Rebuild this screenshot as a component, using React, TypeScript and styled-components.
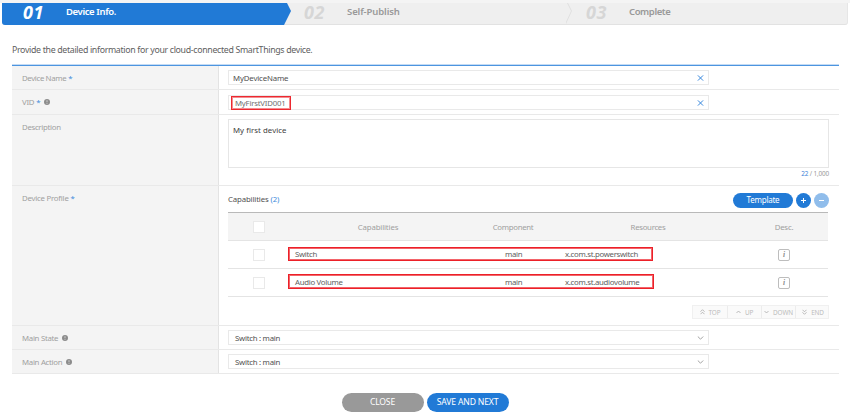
import React from "react";
import styled, { createGlobalStyle, css } from "styled-components";

const Global = createGlobalStyle`
  * { box-sizing: border-box; }
  body { margin: 0; background: #fff; font-family: "Noto Sans", "Open Sans", sans-serif; font-size: 7.8px; color: #555; overflow: hidden; }
  button { font: inherit; color: inherit; }
`;

const Text = styled.span<{ $ls?: number }>`
  letter-spacing: ${(p) => p.$ls ?? -0.3}px;
  white-space: pre;
`;

const Page = styled.main`
  width: 850px;
  height: 414px;
  border-top: 3px solid #f4f4f4;
`;

const Steps = styled.ol`
  list-style: none;
  margin: 0 0 0 2px;
  padding: 0;
  width: 846px;
  height: 22px;
  display: flex;
  background: #efefef;
  border-bottom: 1px solid #e2e2e2;
  border-right: 1px solid #e6e6e6;
  border-radius: 0 0 3px 3px;
`;

const Step = styled.li<{ $active?: boolean; $width: number; $pad: number }>`
  display: flex;
  align-items: center;
  flex: none;
  width: ${(p) => p.$width}px;
  height: 22px;
  padding-left: ${(p) => p.$pad}px;
  color: ${(p) => (p.$active ? "#fff" : "#999")};
  ${(p) =>
    p.$active &&
    css`
      background: #217ad6;
      border-bottom-left-radius: 3px;
      clip-path: polygon(0 0, 285px 0, 289px 8px, 282px 22px, 0 22px);
    `}
`;

const StepNumber = styled.span<{ $active?: boolean }>`
  width: 43px;
  font-size: 18px;
  letter-spacing: 0.6px;
  line-height: 18px;
  margin-top: -5px;
  font-weight: 700;
  font-style: italic;
  color: ${(p) => (p.$active ? "#fff" : "#d6d6d6")};
`;

const StepLabel = styled.span<{ $ls: number }>`
  font-size: 9.5px;
  font-weight: 600;
  line-height: 14px;
  margin-top: -5px;
  letter-spacing: ${(p) => p.$ls}px;
`;

const Chevron = styled.svg`
  flex: none;
  display: block;
`;

const Intro = styled.p`
  margin: 18px 0 0 12px;
  height: 21px;
  font-size: 8.8px;
  line-height: 14px;
  color: #606060;
`;

const Form = styled.section`
  margin-left: 12px;
  width: 827px;
  border-top: 1px solid #c4dbf4;
`;

const FormBody = styled.div`
  border-top: 1px solid #4c95e0;
`;

const Row = styled.div<{ $height: number }>`
  display: grid;
  grid-template-columns: 207px 620px;
  height: ${(p) => p.$height}px;
  border-bottom: 1px solid #e9e9e9;
`;

const Label = styled.div`
  display: flex;
  align-items: flex-start;
  padding: 7px 0 0 10px;
  line-height: 10px;
  background: #f4f4f4;
  border-right: 1px solid #e3e3e3;
  color: #a0a0a0;
  svg { margin: 2px 0 0 4px; }
`;

const Star = styled.span`
  color: #3d8bdb;
  margin-left: 2px;
`;

const Cell = styled.div<{ $top: number }>`
  padding: ${(p) => p.$top}px 0 0 9px;
`;

const Field = styled.div<{ $pad?: number; $drop?: number }>`
  display: flex;
  align-items: center;
  justify-content: space-between;
  width: 481px;
  height: 15px;
  border: 1px solid #e9e9e9;
  padding: 0 4px 0 ${(p) => p.$pad ?? 4}px;
  color: #505050;
  > span { padding-top: ${(p) => p.$drop ?? 0}px; }
`;

const MarkedValue = styled.span`
  display: flex;
  align-items: center;
  flex: none;
  width: 60px;
  height: 14px;
  padding-left: 3px;
  border: 1px solid #ec2930;
  box-shadow: inset 0 0 0 1px #f58c90;
  background: #fff;
  color: #707070;
`;

const TextArea = styled.div`
  width: 601px;
  height: 49px;
  border: 1px solid #e6e6e6;
  padding: 5px 4px;
  line-height: 10px;
  color: #404040;
`;

const Counter = styled.div`
  width: 601px;
  text-align: right;
  font-size: 6.4px;
  letter-spacing: -0.15px;
  line-height: 12px;
  color: #999;
  b { font-weight: 400; color: #3d7fd8; }
`;

const ProfileHead = styled.div`
  display: flex;
  align-items: center;
  width: 601px;
  height: 16px;
  gap: 3px;
  color: #505050;
  b { font-weight: 400; color: #3d8bdb; }
`;

const Title = styled.span`
  flex: 1;
  margin-top: -3px;
`;

const Pill = styled.button<{ $w: number; $h: number; $bg?: string; $size?: number }>`
  display: flex;
  align-items: center;
  justify-content: center;
  flex: none;
  width: ${(p) => p.$w}px;
  height: ${(p) => p.$h}px;
  padding: 0;
  border: 0;
  border-radius: ${(p) => p.$h / 2}px;
  background: ${(p) => p.$bg ?? "#217ad6"};
  color: #fff;
  font-size: ${(p) => p.$size ?? 8}px;
  line-height: 1;
`;

const Table = styled.div`
  width: 600px;
  margin-top: 4px;
  border-top: 1px solid #b9b9b9;
`;

const TableRow = styled.div<{ $head?: boolean }>`
  display: grid;
  grid-template-columns: 60px 450px 90px;
  align-items: center;
  height: 28px;
  border-bottom: 1px solid #e4e4e4;
  ${(p) => p.$head && css`
    background: #f4f4f4;
    color: #a0a0a0;
  `}
`;

const Checkbox = styled.span`
  width: 12px;
  height: 12px;
  margin-left: 25px;
  border: 1px solid #e9e9e9;
  background: #fff;
`;

const HeadCols = styled.div`
  display: grid;
  grid-template-columns: 180px 90px 180px;
  text-align: center;
`;

const MarkedRow = styled.div<{ $w: number; $h: number; $lift: number }>`
  display: grid;
  grid-template-columns: 210px 60px 1fr;
  align-items: center;
  width: ${(p) => p.$w}px;
  height: ${(p) => p.$h}px;
  margin-bottom: ${(p) => p.$lift}px;
  padding-left: 6px;
  border: 1px solid #ec2028;
  box-shadow: inset 0 0 0 1px #f3646a;
  color: #606060;
  line-height: 10px;
`;

const Desc = styled.div`
  display: flex;
  justify-content: center;
  padding-left: 2px;
`;

const InfoButton = styled.span`
  width: 12px;
  height: 12px;
  border: 1px solid #bdbdbd;
  border-radius: 2px;
  font: italic 700 7.5px/10px "Liberation Serif", serif;
  text-align: center;
  color: #8a8a8a;
`;

const Pager = styled.div`
  display: grid;
  grid-template-columns: 35px 34px 34px 34px;
  width: 137px;
  height: 14px;
  margin: 8px 0 0 464px;
  border: 1px solid #f0f0f0;
  background: #fafafa;
`;

const PagerItem = styled.span`
  display: flex;
  align-items: center;
  justify-content: center;
  gap: 4px;
  font-size: 6.4px;
  color: #bbb;
  border-right: 1px solid #ececec;
  &:last-child { border-right: 0; }
`;

const Actions = styled.footer`
  display: flex;
  justify-content: center;
  gap: 3px;
  margin-top: 19px;
`;

const StepDivider = () => (
  <Chevron width="8" height="21" viewBox="0 0 8 21" fill="none" stroke="#e0e0e0">
    <path d="M1.5 0 L5.5 8 L-.5 21" />
  </Chevron>
);

const Hint = () => (
  <svg width="6" height="6" viewBox="0 0 6 6">
    <circle cx="3" cy="3" r="3" fill="#8c8c8c" />
    <path d="M3 1.2v2.1M3 4v.8" stroke="#ddd" strokeWidth=".8" />
  </svg>
);

const Clear = () => (
  <svg width="7" height="6" viewBox="0 0 7 6" stroke="#3686dc" strokeWidth="1">
    <path d="M.9.4l5.2 5.2M6.1.4L.9 5.6" />
  </svg>
);

const Down = () => (
  <svg width="7" height="4" viewBox="0 0 7 4" fill="none" stroke="#999" strokeWidth=".9">
    <path d="M.8.5l2.7 2.7L6.2.5" />
  </svg>
);

const Plus = ({ minus = false }: { minus?: boolean }) => (
  <svg width="5" height="5" viewBox="0 0 5 5" stroke="#fff">
    <path d={minus ? "M0 2.5h5" : "M0 2.5h5M2.5 0v5"} />
  </svg>
);

const arrows: Record<string, string> = {
  TOP: "M.5 2.7l2-2 2 2M.5 5.2l2-2 2 2",
  UP: "M.5 4l2-2 2 2",
  DOWN: "M.5 2l2 2 2-2",
  END: "M.5.8l2 2 2-2M.5 3.3l2 2 2-2",
};

const capabilities = [
  { name: "Switch", resource: "x.com.st.powerswitch", w: 365, h: 14, lift: 1 },
  { name: "Audio Volume", resource: "x.com.st.audiovolume", w: 366, h: 15, lift: 2 },
];

export default function App() {
  return (
    <>
      <Global />
      <Page>
        <Steps>
          <Step $active $width={289} $pad={21}>
            <StepNumber $active>01</StepNumber>
            <StepLabel $ls={-0.38}>Device Info.</StepLabel>
          </Step>
          <Step $width={275} $pad={13}>
            <StepNumber>02</StepNumber>
            <StepLabel $ls={-0.1}>Self-Publish</StepLabel>
          </Step>
          <StepDivider />
          <Step $width={270} $pad={12}>
            <StepNumber>03</StepNumber>
            <StepLabel $ls={-0.4}>Complete</StepLabel>
          </Step>
        </Steps>
        <Intro>
          <Text $ls={-0.33}>Provide the detailed information for your cloud-connected SmartThings device.</Text>
        </Intro>
        <Form>
          <FormBody>
            <Row $height={24}>
              <Label><Text $ls={-0.35}>Device Name</Text><Star>*</Star></Label>
              <Cell $top={4}>
                <Field $drop={1}><Text $ls={-0.15}>MyDeviceName</Text><Clear /></Field>
              </Cell>
            </Row>
            <Row $height={25}>
              <Label><Text>VID</Text><Star>*</Star><Hint /></Label>
              <Cell $top={5}>
                <Field $pad={2}><MarkedValue><Text $ls={-0.22}>MyFirstVID001</Text></MarkedValue><Clear /></Field>
              </Cell>
            </Row>
            <Row $height={71}>
              <Label><Text>Description</Text></Label>
              <Cell $top={4}>
                <TextArea><Text $ls={0.05}>My first device</Text></TextArea>
                <Counter><b>22</b> / 1,000</Counter>
              </Cell>
            </Row>
            <Row $height={140}>
              <Label><Text $ls={-0.22}>Device Profile</Text><Star>*</Star></Label>
              <Cell $top={6}>
                <ProfileHead>
                  <Title><Text $ls={-0.14}>Capabilities <b>(2)</b></Text></Title>
                  <Pill $w={60} $h={15}><Text $ls={-0.25}>Template</Text></Pill>
                  <Pill $w={15} $h={15} aria-label="Add"><Plus /></Pill>
                  <Pill $w={15} $h={15} $bg="#90bdeb" aria-label="Remove"><Plus minus /></Pill>
                </ProfileHead>
                <Table>
                  <TableRow $head>
                    <Checkbox />
                    <HeadCols>
                      <Text $ls={-0.15}>Capabilities</Text><Text>Component</Text><Text>Resources</Text>
                    </HeadCols>
                    <Desc><Text $ls={-0.2}>Desc.</Text></Desc>
                  </TableRow>
                  {capabilities.map((c) => (
                    <TableRow key={c.name}>
                      <Checkbox />
                      <MarkedRow $w={c.w} $h={c.h} $lift={c.lift}>
                        <Text>{c.name}</Text><Text>main</Text><Text>{c.resource}</Text>
                      </MarkedRow>
                      <Desc><InfoButton>i</InfoButton></Desc>
                    </TableRow>
                  ))}
                </Table>
                <Pager>
                  {Object.entries(arrows).map(([label, d]) => (
                    <PagerItem key={label}>
                      <svg width="5" height="6" viewBox="0 0 5 6" fill="none" stroke="#aaa" strokeWidth=".8"><path d={d} /></svg>
                      <Text $ls={-0.15}>{label}</Text>
                    </PagerItem>
                  ))}
                </Pager>
              </Cell>
            </Row>
            {["Main State", "Main Action"].map((label) => (
              <Row $height={24} key={label}>
                <Label><Text $ls={-0.28}>{label}</Text><Hint /></Label>
                <Cell $top={4}>
                  <Field $pad={6}><Text $ls={-0.26}>Switch : main</Text><Down /></Field>
                </Cell>
              </Row>
            ))}
          </FormBody>
        </Form>
        <Actions>
          <Pill $w={82} $h={19} $bg="#999" $size={8.6}><Text $ls={-0.2}>CLOSE</Text></Pill>
          <Pill $w={82} $h={19} $size={8.6}><Text $ls={-0.15}>SAVE AND NEXT</Text></Pill>
        </Actions>
      </Page>
    </>
  );
}
